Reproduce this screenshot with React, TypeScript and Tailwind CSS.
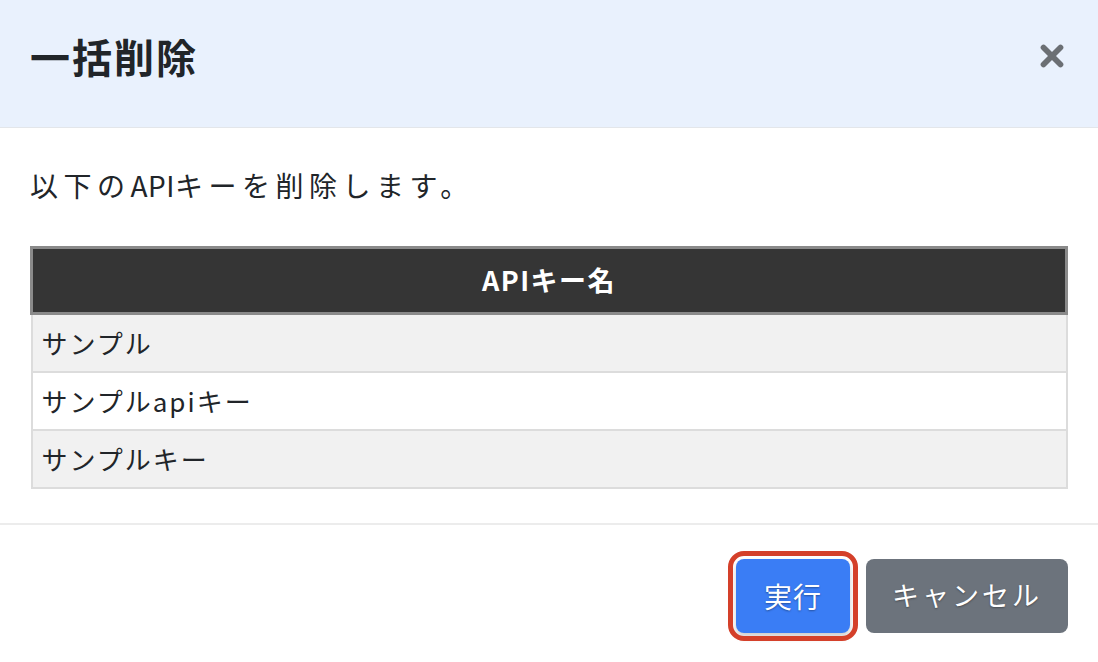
import { X } from 'lucide-react';

const rows = ['サンプル', 'サンプルapiキー', 'サンプルキー'];

export default function App() {
  return (
    <div
      className="w-[1098px] h-[662px] overflow-hidden bg-white text-[#212529]"
      style={{ fontFamily: '"Noto Sans CJK JP", "Noto Sans", sans-serif' }}
    >
      {/* ── Header ───────────────────────────────── */}
      <header className="h-[128px] bg-[#e9f1fd] border-b border-[#e3e6ea] flex items-center justify-between pl-[30px] pr-[29px] pb-[16px]">
        <h1 className="text-[40px] font-bold leading-none tracking-[2px]">一括削除</h1>
        <button type="button" className="text-[#6b6f74]">
          <X size={34} strokeWidth={4} />
        </button>
      </header>

      {/* ── Body ─────────────────────────────────── */}
      <main className="px-[30px] pt-[37px] pb-[34px]">
        <p className="text-[28px] leading-[40px] tracking-[5.5px]">
          以下の<span className="tracking-[0.5px]">API</span>キーを削除します。
        </p>
        <table className="mt-[41px] w-full border-collapse text-[26px]">
          <thead>
            <tr>
              <th className="h-[66px] bg-[#353535] border-[3px] border-[#8a8a8a] text-white font-bold text-[27px] tracking-[1.5px] text-center">
                APIキー名
              </th>
            </tr>
          </thead>
          <tbody>
            {rows.map((r, i) => (
              <tr key={r} className={i % 2 === 0 ? 'bg-[#f1f1f1]' : 'bg-white'}>
                <td className="h-[58px] border-2 border-[#dcdcdc] pl-[9px] text-left tracking-[2px]">{r}</td>
              </tr>
            ))}
          </tbody>
        </table>
      </main>

      {/* ── Footer ───────────────────────────────── */}
      <footer className="border-t-2 border-[#ececec] pt-[34px] pr-[30px] flex justify-end gap-[16px]">
        <button
          type="button"
          className="w-[114px] h-[74px] rounded-[8px] bg-[#3a7df5] text-white text-[28px] tracking-[1px] outline-[5px] outline-solid outline-[#d4402a] outline-offset-[3px] shadow-[0_4px_6px_rgba(0,0,0,0.2)] [text-shadow:0_1px_2px_rgba(0,0,0,0.35)]"
        >
          実行
        </button>
        <button
          type="button"
          className="w-[202px] h-[74px] rounded-[8px] bg-[#6c737c] text-white text-[27px] tracking-[3px] [text-shadow:0_1px_2px_rgba(0,0,0,0.35)]"
        >
          キャンセル
        </button>
      </footer>
    </div>
  );
}
